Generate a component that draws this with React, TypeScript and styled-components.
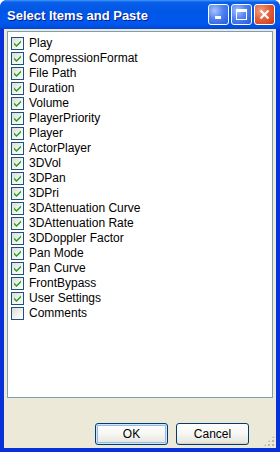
import React from "react";
import styled, { createGlobalStyle } from "styled-components";

const GlobalStyle = createGlobalStyle`
  html, body {
    margin: 0;
    padding: 0;
    background: #ffffff;
  }
`;

const Window = styled.div`
  width: 280px;
  height: 452px;
  display: flex;
  flex-direction: column;
  box-sizing: border-box;
  background: #0831d9;
  border-radius: 7px 7px 0 0;
  overflow: hidden;
  font-family: "Liberation Sans", Arial, sans-serif;
`;

const TitleBar = styled.div`
  height: 29px;
  flex: none;
  display: flex;
  align-items: center;
  padding: 0 5px 0 7px;
  background: linear-gradient(
    to bottom,
    #3d95ff 0%,
    #0a5fe8 8%,
    #0056e6 40%,
    #0058ee 80%,
    #0047d6 100%
  );
  gap: 2px;
`;

const Title = styled.div`
  flex: 1;
  color: #ffffff;
  font-weight: bold;
  font-size: 13px;
  text-shadow: 1px 1px 0 #0a1883;
  padding-top: 1px;
`;

const CaptionButton = styled.div<{ $close?: boolean }>`
  width: 21px;
  height: 21px;
  box-sizing: border-box;
  border: 1px solid #ffffff;
  border-radius: 3px;
  display: flex;
  align-items: center;
  justify-content: center;
  background: ${(p) =>
    p.$close
      ? "radial-gradient(circle at 30% 30%, #f0a080 0%, #e5603a 45%, #c83a16 100%)"
      : "radial-gradient(circle at 30% 30%, #a8c4ff 0%, #4f82f0 45%, #2457d8 100%)"};
`;

const Frame = styled.div`
  flex: 1;
  display: flex;
  flex-direction: column;
  margin: 0 4px 4px 4px;
  background: #ece9d8;
  position: relative;
`;

const ListBox = styled.div`
  margin: 2px 0 0 3px;
  width: 266px;
  height: 367px;
  box-sizing: border-box;
  border: 1px solid #7f9db9;
  background: #ffffff;
  padding: 4px 0 0 3px;
  display: flex;
  flex-direction: column;
`;

const Row = styled.div`
  height: 15px;
  flex: none;
  display: flex;
  align-items: center;
  gap: 5px;
  font-size: 12px;
  line-height: 15px;
  color: #000000;
`;

const CheckBox = styled.div`
  width: 13px;
  height: 13px;
  flex: none;
  box-sizing: border-box;
  border: 1px solid #1c5180;
  background: linear-gradient(135deg, #dcdcd7 0%, #f4f4f0 60%, #ffffff 100%);
  display: flex;
  align-items: center;
  justify-content: center;
`;

const ButtonBar = styled.div`
  display: flex;
  justify-content: flex-end;
  gap: 8px;
  padding: 25px 27px 0 0;
`;

const PushButton = styled.div<{ $default?: boolean }>`
  width: 73px;
  height: 22px;
  box-sizing: border-box;
  border: 1px solid #003c74;
  border-radius: 3px;
  background: linear-gradient(to bottom, #ffffff 0%, #f6f6f3 50%, #e8e7e0 90%, #d6d0c5 100%);
  box-shadow: ${(p) =>
    p.$default ? "inset 0 0 0 1px #cee7ff, inset 0 0 0 2px #98b8ea" : "none"};
  display: flex;
  align-items: center;
  justify-content: center;
  font-size: 12px;
  color: #000000;
`;

const Grip = styled.div`
  position: absolute;
  right: 1px;
  bottom: 1px;
  width: 12px;
  height: 12px;
  background-image: radial-gradient(circle, #b9b6a8 0.9px, transparent 1px);
  background-size: 4px 4px;
  clip-path: polygon(100% 0, 100% 100%, 0 100%);
`;

const items = [
  "Play",
  "CompressionFormat",
  "File Path",
  "Duration",
  "Volume",
  "PlayerPriority",
  "Player",
  "ActorPlayer",
  "3DVol",
  "3DPan",
  "3DPri",
  "3DAttenuation Curve",
  "3DAttenuation Rate",
  "3DDoppler Factor",
  "Pan Mode",
  "Pan Curve",
  "FrontBypass",
  "User Settings",
];

const Check = () => (
  <svg width="9" height="9" viewBox="0 0 9 9">
    <path d="M1 3.5 L3.5 6 L8 1.5 L8 3.5 L3.5 8 L1 5.5 Z" fill="#21a121" />
  </svg>
);

export default function App() {
  return (
    <>
      <GlobalStyle />
      <Window>
        <TitleBar>
          <Title>Select Items and Paste</Title>
          <CaptionButton>
            <svg width="11" height="11" viewBox="0 0 11 11">
              <rect x="2" y="7" width="6" height="3" fill="#fff" />
            </svg>
          </CaptionButton>
          <CaptionButton>
            <svg width="13" height="13" viewBox="0 0 13 13">
              <rect x="1.5" y="1.5" width="10" height="10" fill="none" stroke="#fff" />
              <rect x="1" y="1" width="11" height="3" fill="#fff" />
            </svg>
          </CaptionButton>
          <CaptionButton $close>
            <svg width="13" height="13" viewBox="0 0 13 13">
              <path d="M2.5 2.5 L10.5 10.5 M10.5 2.5 L2.5 10.5" stroke="#fff" strokeWidth="2.2" />
            </svg>
          </CaptionButton>
        </TitleBar>
        <Frame>
          <ListBox>
            {items.map((item) => (
              <Row key={item}>
                <CheckBox>
                  <Check />
                </CheckBox>
                {item}
              </Row>
            ))}
            <Row>
              <CheckBox />
              Comments
            </Row>
          </ListBox>
          <ButtonBar>
            <PushButton $default>OK</PushButton>
            <PushButton>Cancel</PushButton>
          </ButtonBar>
          <Grip />
        </Frame>
      </Window>
    </>
  );
}
